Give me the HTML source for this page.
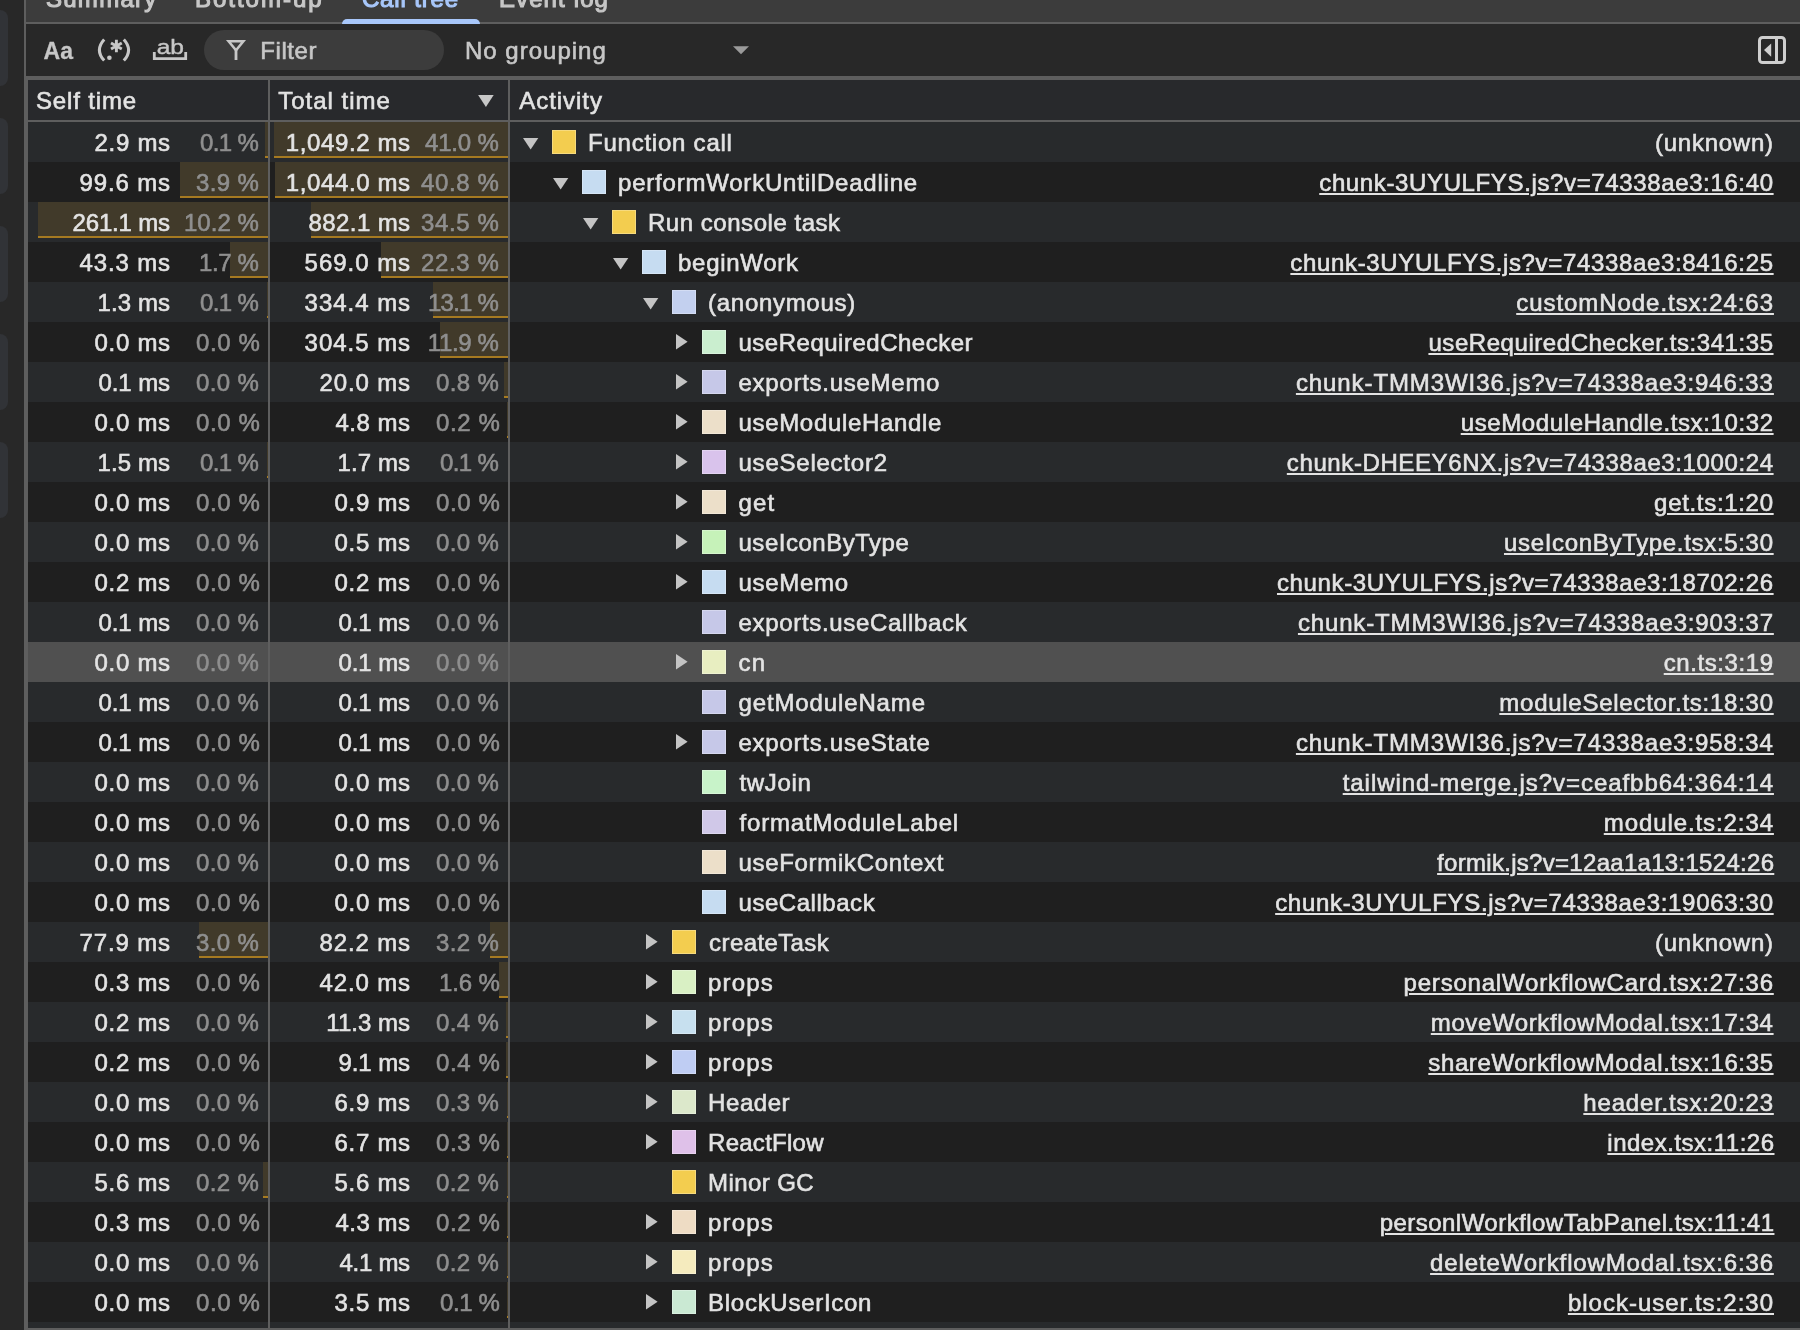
<!DOCTYPE html><html><head><meta charset="utf-8"><title>Call tree</title><style>
*{box-sizing:border-box;margin:0;padding:0}
html,body{width:1800px;height:1330px;overflow:hidden;background:#282828}
body{position:relative;font-family:"Liberation Sans",sans-serif;font-size:24px;color:#e3e3e3;line-height:40px;-webkit-text-stroke:0.6px}
.a{position:absolute}
.lr{left:0;width:8px;height:76px;background:#313337;border-radius:0 8px 8px 0}
.t{white-space:pre;display:block}
.row{left:28px;width:1772px;height:40px}
.o{background:#282a2c}.e{background:#1f1f1f}.h{background:#505050}
.bar{top:0;height:36px;background:#413a2a;border-bottom:2px solid #a67a21}
.n{top:1px;text-align:right;white-space:pre}
.p{color:#8f8f8f}
.sq{top:8px;width:24px;height:24px;border:1px solid rgba(255,255,255,.27)}
.nm{top:1px;white-space:pre}
.lk{top:1px;white-space:pre;text-align:right}
.u{text-decoration:underline;text-decoration-thickness:2px;text-underline-offset:2px}
svg{display:block}
#w{position:absolute;left:0;top:0;width:1800px;height:1330px;will-change:transform}
</style></head><body><div id="w">
<div class="a lr" style="top:10px"></div>
<div class="a lr" style="top:118px"></div>
<div class="a lr" style="top:226px"></div>
<div class="a lr" style="top:334px"></div>
<div class="a lr" style="top:442px"></div>
<div class="a" style="left:24px;top:0;width:2px;height:1330px;background:#5e5e5e"></div>
<div class="a" style="left:26px;top:0;width:1774px;height:22px;background:#3c3c3c"></div>
<div class="a" style="left:26px;top:22px;width:1774px;height:2px;background:#5e5e5e"></div>
<div class="a t" id="tab0" style="left:45.90px;top:-21px;color:#c7c7c7;-webkit-text-stroke:1.1px"><span style="letter-spacing:1.299px;margin-right:-1.299px">Summary</span></div>
<div class="a t" id="tab1" style="left:194.90px;top:-21px;color:#c7c7c7;-webkit-text-stroke:1.1px"><span style="letter-spacing:2.000px;margin-right:-2.000px">Bottom-up</span></div>
<div class="a t" id="tab2" style="left:361.90px;top:-21px;color:#a8c7fa;-webkit-text-stroke:1.1px"><span style="letter-spacing:0.853px;margin-right:-0.853px">Call tree</span></div>
<div class="a t" id="tab3" style="left:498.90px;top:-21px;color:#c7c7c7;-webkit-text-stroke:1.1px"><span style="letter-spacing:1.125px;margin-right:-1.125px">Event log</span></div>
<div class="a" style="left:342px;top:19px;width:138px;height:5px;background:#a8c7fa;border-radius:5px 5px 0 0"></div>
<div class="a" style="left:26px;top:24px;width:1774px;height:52px;background:#282828"></div>
<div class="a" style="left:26px;top:76px;width:1774px;height:4px;background:#5e5e5e"></div>
<svg class="a" style="left:26px;top:24px" width="1774" height="52" viewBox="26 24 1774 52">
<text id="tAa" x="43.6" y="58.6" stroke="#c7c7c7" stroke-width="0.3" font-family="Liberation Sans, sans-serif" font-weight="bold" font-size="23" fill="#c7c7c7">Aa</text>
<g fill="none" stroke="#c7c7c7" stroke-width="3" stroke-linecap="butt">
<path d="M104.2 39.4Q94.6 50 104.2 60.6"/>
<path d="M123.8 39.4Q133.4 50 123.8 60.6"/>
<path d="M116.4 39.8v12.4M111 42.9l10.8 6.2M121.8 42.9l-10.8 6.2" stroke-width="2.9"/>
</g>
<circle cx="109.4" cy="57.7" r="2.3" fill="#c7c7c7"/>
<text id="tab" transform="translate(156.7,54.4) scale(1.17,1)" font-family="Liberation Sans, sans-serif" font-size="21" fill="#c7c7c7" stroke="#c7c7c7" stroke-width="0.4">ab</text>
<path d="M154.3 52v6.6h31.4V52" fill="none" stroke="#c7c7c7" stroke-width="2.8"/>
<rect x="204" y="30" width="240" height="40" rx="20" fill="#3c3c3c"/>
<path d="M228.6 41.3h14.8L236 50.3z" fill="none" stroke="#c7c7c7" stroke-width="2.5" stroke-linejoin="miter"/><rect x="234.6" y="49" width="2.8" height="11" fill="#c7c7c7"/>
<path d="M733 46.2h16l-8 8z" fill="#9a9a9a"/>
<rect x="1759.5" y="37.5" width="25" height="25" rx="3" fill="none" stroke="#cfcfcf" stroke-width="3"/>
<path d="M1776.5 38v24" stroke="#cfcfcf" stroke-width="3"/>
<path d="M1771.2 43.5v13.2L1764 50z" fill="#cfcfcf"/>
</svg>
<div class="a t" id="tf" style="left:260.20px;top:31px;color:#c7c7c7"><span style="letter-spacing:0.600px;margin-right:-0.600px">Filter</span></div>
<div class="a t" id="tg" style="left:465.00px;top:31px;color:#c7c7c7"><span style="letter-spacing:1.000px;margin-right:-1.000px">No grouping</span></div>
<div class="a" style="left:26px;top:78px;width:2px;height:1252px;background:#5e5e5e"></div>
<div class="a" style="left:28px;top:80px;width:1772px;height:40px;background:#28292c"></div>
<div class="a" style="left:28px;top:120px;width:1772px;height:2px;background:#5e5e5e"></div>
<div class="a t" id="h0" style="left:36.00px;top:81px;"><span style="letter-spacing:0.853px;margin-right:-0.853px">Self time</span></div>
<div class="a t" id="h1" style="left:278.20px;top:81px;"><span style="letter-spacing:1.000px;margin-right:-1.000px">Total time</span></div>
<div class="a t" id="h2" style="left:519.20px;top:81px;"><span style="letter-spacing:0.972px;margin-right:-0.972px">Activity</span></div>
<svg class="a" style="left:478px;top:95.4px" width="16" height="13" viewBox="0 0 16 13"><path d="M0.1 0h15.6L7.9 11.9z" fill="#c7c7c7"/></svg>
<div class="a row o" style="top:122px">
<div class="a bar" style="left:237.4px;width:2.6px"></div>
<div class="a bar" style="left:245.9px;width:234.1px"></div>
<div class="a n" id="r0a" style="right:1629.90px"><span style="letter-spacing:0.720px;margin-right:-0.720px">2.9 ms</span></div>
<div class="a n p" id="r0b" style="right:1541.10px"><span style="letter-spacing:-0.600px;margin-right:0.600px">0.1 %</span></div>
<div class="a n" id="r0c" style="right:1389.90px"><span style="letter-spacing:0.622px;margin-right:-0.622px">1,049.2 ms</span></div>
<div class="a n p" id="r0d" style="right:1301.10px"><span style="letter-spacing:-0.160px;margin-right:0.160px">41.0 %</span></div>
<svg class="a" style="left:494.9px;top:15.7px" width="16" height="12" viewBox="0 0 16 12"><path d="M0 0h15.3L7.65 11.5z" fill="#c4c4c4"/></svg>
<div class="a sq" style="left:524px;background:#f3cd4f"></div>
<div class="a nm" id="r0n" style="left:560.00px;"><span style="letter-spacing:0.766px;margin-right:-0.766px">Function call</span></div>
<div class="a lk" id="r0l" style="right:27.00px"><span style="letter-spacing:0.750px;margin-right:-0.750px">(unknown)</span></div>
</div>
<div class="a row e" style="top:162px">
<div class="a bar" style="left:152.3px;width:87.7px"></div>
<div class="a bar" style="left:247.1px;width:232.9px"></div>
<div class="a n" id="r1a" style="right:1629.90px"><span style="letter-spacing:0.866px;margin-right:-0.866px">99.6 ms</span></div>
<div class="a n p" id="r1b" style="right:1541.10px"><span style="letter-spacing:0.400px;margin-right:-0.400px">3.9 %</span></div>
<div class="a n" id="r1c" style="right:1389.90px"><span style="letter-spacing:0.622px;margin-right:-0.622px">1,044.0 ms</span></div>
<div class="a n p" id="r1d" style="right:1301.10px"><span style="letter-spacing:0.640px;margin-right:-0.640px">40.8 %</span></div>
<svg class="a" style="left:524.9px;top:15.7px" width="16" height="12" viewBox="0 0 16 12"><path d="M0 0h15.3L7.65 11.5z" fill="#c4c4c4"/></svg>
<div class="a sq" style="left:554px;background:#c6dcf1"></div>
<div class="a nm" id="r1n" style="left:590.00px;"><span style="letter-spacing:0.791px;margin-right:-0.791px">performWorkUntilDeadline</span></div>
<div class="a lk u" id="r1l" style="right:27.00px"><span style="letter-spacing:0.630px;margin-right:-0.630px">chunk-3UYULFYS.js?v=74338ae3:16:40</span></div>
</div>
<div class="a row o" style="top:202px">
<div class="a bar" style="left:10.0px;width:230.0px"></div>
<div class="a bar" style="left:283.2px;width:196.8px"></div>
<div class="a n" id="r2a" style="right:1629.90px"><span style="letter-spacing:-0.171px;margin-right:0.171px">261.1 ms</span></div>
<div class="a n p" id="r2b" style="right:1541.10px"><span style="letter-spacing:0.040px;margin-right:-0.040px">10.2 %</span></div>
<div class="a n" id="r2c" style="right:1389.90px"><span style="letter-spacing:0.401px;margin-right:-0.401px">882.1 ms</span></div>
<div class="a n p" id="r2d" style="right:1301.10px"><span style="letter-spacing:0.640px;margin-right:-0.640px">34.5 %</span></div>
<svg class="a" style="left:554.9px;top:15.7px" width="16" height="12" viewBox="0 0 16 12"><path d="M0 0h15.3L7.65 11.5z" fill="#c4c4c4"/></svg>
<div class="a sq" style="left:584px;background:#f3cd4f"></div>
<div class="a nm" id="r2n" style="left:620.00px;"><span style="letter-spacing:0.533px;margin-right:-0.533px">Run console task</span></div>
</div>
<div class="a row e" style="top:242px">
<div class="a bar" style="left:201.9px;width:38.1px"></div>
<div class="a bar" style="left:353.1px;width:126.9px"></div>
<div class="a n" id="r3a" style="right:1629.90px"><span style="letter-spacing:0.866px;margin-right:-0.866px">43.3 ms</span></div>
<div class="a n p" id="r3b" style="right:1541.10px"><span style="letter-spacing:-0.350px;margin-right:0.350px">1.7 %</span></div>
<div class="a n" id="r3c" style="right:1389.90px"><span style="letter-spacing:0.972px;margin-right:-0.972px">569.0 ms</span></div>
<div class="a n p" id="r3d" style="right:1301.10px"><span style="letter-spacing:0.640px;margin-right:-0.640px">22.3 %</span></div>
<svg class="a" style="left:584.9px;top:15.7px" width="16" height="12" viewBox="0 0 16 12"><path d="M0 0h15.3L7.65 11.5z" fill="#c4c4c4"/></svg>
<div class="a sq" style="left:614px;background:#c6dcf1"></div>
<div class="a nm" id="r3n" style="left:650.00px;"><span style="letter-spacing:0.724px;margin-right:-0.724px">beginWork</span></div>
<div class="a lk u" id="r3l" style="right:27.00px"><span style="letter-spacing:0.657px;margin-right:-0.657px">chunk-3UYULFYS.js?v=74338ae3:8416:25</span></div>
</div>
<div class="a row o" style="top:282px">
<div class="a bar" style="left:238.9px;width:1.1px"></div>
<div class="a bar" style="left:405.4px;width:74.6px"></div>
<div class="a n" id="r4a" style="right:1629.90px"><span style="letter-spacing:0.120px;margin-right:-0.120px">1.3 ms</span></div>
<div class="a n p" id="r4b" style="right:1541.10px"><span style="letter-spacing:-0.600px;margin-right:0.600px">0.1 %</span></div>
<div class="a n" id="r4c" style="right:1389.90px"><span style="letter-spacing:0.972px;margin-right:-0.972px">334.4 ms</span></div>
<div class="a n p" id="r4d" style="right:1301.10px"><span style="letter-spacing:-0.760px;margin-right:0.760px">13.1 %</span></div>
<svg class="a" style="left:614.9px;top:15.7px" width="16" height="12" viewBox="0 0 16 12"><path d="M0 0h15.3L7.65 11.5z" fill="#c4c4c4"/></svg>
<div class="a sq" style="left:644px;background:#c3d0ef"></div>
<div class="a nm" id="r4n" style="left:680.10px;"><span style="letter-spacing:0.700px;margin-right:-0.700px">(anonymous)</span></div>
<div class="a lk u" id="r4l" style="right:27.00px"><span style="letter-spacing:0.947px;margin-right:-0.947px">customNode.tsx:24:63</span></div>
</div>
<div class="a row e" style="top:322px">
<div class="a bar" style="left:412.1px;width:67.9px"></div>
<div class="a n" id="r5a" style="right:1629.90px"><span style="letter-spacing:0.720px;margin-right:-0.720px">0.0 ms</span></div>
<div class="a n p" id="r5b" style="right:1540.10px"><span style="letter-spacing:0.650px;margin-right:-0.650px">0.0 %</span></div>
<div class="a n" id="r5c" style="right:1389.90px"><span style="letter-spacing:0.972px;margin-right:-0.972px">304.5 ms</span></div>
<div class="a n p" id="r5d" style="right:1301.10px"><span style="letter-spacing:-0.360px;margin-right:0.360px">11.9 %</span></div>
<svg class="a" style="left:648px;top:11.5px" width="12" height="16" viewBox="0 0 12 16"><path d="M0 0L11.6 7.7L0 15.4z" fill="#c4c4c4"/></svg>
<div class="a sq" style="left:674px;background:#caeecf"></div>
<div class="a nm" id="r5n" style="left:710.50px;"><span style="letter-spacing:0.507px;margin-right:-0.507px">useRequiredChecker</span></div>
<div class="a lk u" id="r5l" style="right:27.00px"><span style="letter-spacing:0.556px;margin-right:-0.556px">useRequiredChecker.ts:341:35</span></div>
</div>
<div class="a row o" style="top:362px">
<div class="a bar" style="left:475.5px;width:4.5px"></div>
<div class="a n" id="r6a" style="right:1629.90px"><span style="letter-spacing:-0.080px;margin-right:0.080px">0.1 ms</span></div>
<div class="a n p" id="r6b" style="right:1541.10px"><span style="letter-spacing:0.400px;margin-right:-0.400px">0.0 %</span></div>
<div class="a n" id="r6c" style="right:1389.90px"><span style="letter-spacing:0.866px;margin-right:-0.866px">20.0 ms</span></div>
<div class="a n p" id="r6d" style="right:1301.10px"><span style="letter-spacing:0.400px;margin-right:-0.400px">0.8 %</span></div>
<svg class="a" style="left:648px;top:11.5px" width="12" height="16" viewBox="0 0 12 16"><path d="M0 0L11.6 7.7L0 15.4z" fill="#c4c4c4"/></svg>
<div class="a sq" style="left:674px;background:#c6c8e8"></div>
<div class="a nm" id="r6n" style="left:710.50px;"><span style="letter-spacing:0.729px;margin-right:-0.729px">exports.useMemo</span></div>
<div class="a lk u" id="r6l" style="right:27.00px"><span style="letter-spacing:0.906px;margin-right:-0.906px">chunk-TMM3WI36.js?v=74338ae3:946:33</span></div>
</div>
<div class="a row e" style="top:402px">
<div class="a bar" style="left:478.9px;width:1.1px"></div>
<div class="a n" id="r7a" style="right:1629.90px"><span style="letter-spacing:0.720px;margin-right:-0.720px">0.0 ms</span></div>
<div class="a n p" id="r7b" style="right:1540.10px"><span style="letter-spacing:0.650px;margin-right:-0.650px">0.0 %</span></div>
<div class="a n" id="r7c" style="right:1389.90px"><span style="letter-spacing:0.520px;margin-right:-0.520px">4.8 ms</span></div>
<div class="a n p" id="r7d" style="right:1300.10px"><span style="letter-spacing:0.650px;margin-right:-0.650px">0.2 %</span></div>
<svg class="a" style="left:648px;top:11.5px" width="12" height="16" viewBox="0 0 12 16"><path d="M0 0L11.6 7.7L0 15.4z" fill="#c4c4c4"/></svg>
<div class="a sq" style="left:674px;background:#ecdfc9"></div>
<div class="a nm" id="r7n" style="left:710.50px;"><span style="letter-spacing:0.671px;margin-right:-0.671px">useModuleHandle</span></div>
<div class="a lk u" id="r7l" style="right:27.00px"><span style="letter-spacing:0.615px;margin-right:-0.615px">useModuleHandle.tsx:10:32</span></div>
</div>
<div class="a row o" style="top:442px">
<div class="a bar" style="left:238.7px;width:1.3px"></div>
<div class="a n" id="r8a" style="right:1629.90px"><span style="letter-spacing:0.120px;margin-right:-0.120px">1.5 ms</span></div>
<div class="a n p" id="r8b" style="right:1541.10px"><span style="letter-spacing:-0.600px;margin-right:0.600px">0.1 %</span></div>
<div class="a n" id="r8c" style="right:1389.90px"><span style="letter-spacing:0.120px;margin-right:-0.120px">1.7 ms</span></div>
<div class="a n p" id="r8d" style="right:1301.10px"><span style="letter-spacing:-0.600px;margin-right:0.600px">0.1 %</span></div>
<svg class="a" style="left:648px;top:11.5px" width="12" height="16" viewBox="0 0 12 16"><path d="M0 0L11.6 7.7L0 15.4z" fill="#c4c4c4"/></svg>
<div class="a sq" style="left:674px;background:#d9c3ec"></div>
<div class="a nm" id="r8n" style="left:710.50px;"><span style="letter-spacing:0.765px;margin-right:-0.765px">useSelector2</span></div>
<div class="a lk u" id="r8l" style="right:27.00px"><span style="letter-spacing:0.605px;margin-right:-0.605px">chunk-DHEEY6NX.js?v=74338ae3:1000:24</span></div>
</div>
<div class="a row e" style="top:482px">
<div class="a n" id="r9a" style="right:1629.90px"><span style="letter-spacing:0.720px;margin-right:-0.720px">0.0 ms</span></div>
<div class="a n p" id="r9b" style="right:1540.10px"><span style="letter-spacing:0.650px;margin-right:-0.650px">0.0 %</span></div>
<div class="a n" id="r9c" style="right:1389.90px"><span style="letter-spacing:0.720px;margin-right:-0.720px">0.9 ms</span></div>
<div class="a n p" id="r9d" style="right:1300.10px"><span style="letter-spacing:0.650px;margin-right:-0.650px">0.0 %</span></div>
<svg class="a" style="left:648px;top:11.5px" width="12" height="16" viewBox="0 0 12 16"><path d="M0 0L11.6 7.7L0 15.4z" fill="#c4c4c4"/></svg>
<div class="a sq" style="left:674px;background:#ecdfc9"></div>
<div class="a nm" id="r9n" style="left:710.50px;"><span style="letter-spacing:1.200px;margin-right:-1.200px">get</span></div>
<div class="a lk u" id="r9l" style="right:27.00px"><span style="letter-spacing:0.680px;margin-right:-0.680px">get.ts:1:20</span></div>
</div>
<div class="a row o" style="top:522px">
<div class="a n" id="r10a" style="right:1629.90px"><span style="letter-spacing:0.720px;margin-right:-0.720px">0.0 ms</span></div>
<div class="a n p" id="r10b" style="right:1541.10px"><span style="letter-spacing:0.400px;margin-right:-0.400px">0.0 %</span></div>
<div class="a n" id="r10c" style="right:1389.90px"><span style="letter-spacing:0.720px;margin-right:-0.720px">0.5 ms</span></div>
<div class="a n p" id="r10d" style="right:1301.10px"><span style="letter-spacing:0.400px;margin-right:-0.400px">0.0 %</span></div>
<svg class="a" style="left:648px;top:11.5px" width="12" height="16" viewBox="0 0 12 16"><path d="M0 0L11.6 7.7L0 15.4z" fill="#c4c4c4"/></svg>
<div class="a sq" style="left:674px;background:#c6f2b9"></div>
<div class="a nm" id="r10n" style="left:710.50px;"><span style="letter-spacing:0.516px;margin-right:-0.516px">useIconByType</span></div>
<div class="a lk u" id="r10l" style="right:27.00px"><span style="letter-spacing:0.676px;margin-right:-0.676px">useIconByType.tsx:5:30</span></div>
</div>
<div class="a row e" style="top:562px">
<div class="a n" id="r11a" style="right:1629.90px"><span style="letter-spacing:0.720px;margin-right:-0.720px">0.2 ms</span></div>
<div class="a n p" id="r11b" style="right:1540.10px"><span style="letter-spacing:0.650px;margin-right:-0.650px">0.0 %</span></div>
<div class="a n" id="r11c" style="right:1389.90px"><span style="letter-spacing:0.720px;margin-right:-0.720px">0.2 ms</span></div>
<div class="a n p" id="r11d" style="right:1300.10px"><span style="letter-spacing:0.650px;margin-right:-0.650px">0.0 %</span></div>
<svg class="a" style="left:648px;top:11.5px" width="12" height="16" viewBox="0 0 12 16"><path d="M0 0L11.6 7.7L0 15.4z" fill="#c4c4c4"/></svg>
<div class="a sq" style="left:674px;background:#c6dcf1"></div>
<div class="a nm" id="r11n" style="left:710.50px;"><span style="letter-spacing:0.698px;margin-right:-0.698px">useMemo</span></div>
<div class="a lk u" id="r11l" style="right:27.00px"><span style="letter-spacing:0.639px;margin-right:-0.639px">chunk-3UYULFYS.js?v=74338ae3:18702:26</span></div>
</div>
<div class="a row o" style="top:602px">
<div class="a n" id="r12a" style="right:1629.90px"><span style="letter-spacing:-0.080px;margin-right:0.080px">0.1 ms</span></div>
<div class="a n p" id="r12b" style="right:1541.10px"><span style="letter-spacing:0.400px;margin-right:-0.400px">0.0 %</span></div>
<div class="a n" id="r12c" style="right:1389.90px"><span style="letter-spacing:-0.080px;margin-right:0.080px">0.1 ms</span></div>
<div class="a n p" id="r12d" style="right:1301.10px"><span style="letter-spacing:0.400px;margin-right:-0.400px">0.0 %</span></div>
<div class="a sq" style="left:674px;background:#c6c8e8"></div>
<div class="a nm" id="r12n" style="left:710.50px;"><span style="letter-spacing:0.676px;margin-right:-0.676px">exports.useCallback</span></div>
<div class="a lk u" id="r12l" style="right:27.00px"><span style="letter-spacing:0.847px;margin-right:-0.847px">chunk-TMM3WI36.js?v=74338ae3:903:37</span></div>
</div>
<div class="a row h" style="top:642px">
<div class="a n" id="r13a" style="right:1629.90px"><span style="letter-spacing:0.720px;margin-right:-0.720px">0.0 ms</span></div>
<div class="a n p" id="r13b" style="right:1541.10px"><span style="letter-spacing:0.400px;margin-right:-0.400px">0.0 %</span></div>
<div class="a n" id="r13c" style="right:1389.90px"><span style="letter-spacing:-0.080px;margin-right:0.080px">0.1 ms</span></div>
<div class="a n p" id="r13d" style="right:1301.10px"><span style="letter-spacing:0.400px;margin-right:-0.400px">0.0 %</span></div>
<svg class="a" style="left:648px;top:11.5px" width="12" height="16" viewBox="0 0 12 16"><path d="M0 0L11.6 7.7L0 15.4z" fill="#c4c4c4"/></svg>
<div class="a sq" style="left:674px;background:#e8eec1"></div>
<div class="a nm" id="r13n" style="left:710.50px;"><span style="letter-spacing:1.200px;margin-right:-1.200px">cn</span></div>
<div class="a lk u" id="r13l" style="right:27.00px"><span style="letter-spacing:0.579px;margin-right:-0.579px">cn.ts:3:19</span></div>
</div>
<div class="a row o" style="top:682px">
<div class="a n" id="r14a" style="right:1629.90px"><span style="letter-spacing:-0.080px;margin-right:0.080px">0.1 ms</span></div>
<div class="a n p" id="r14b" style="right:1541.10px"><span style="letter-spacing:0.400px;margin-right:-0.400px">0.0 %</span></div>
<div class="a n" id="r14c" style="right:1389.90px"><span style="letter-spacing:-0.080px;margin-right:0.080px">0.1 ms</span></div>
<div class="a n p" id="r14d" style="right:1301.10px"><span style="letter-spacing:0.400px;margin-right:-0.400px">0.0 %</span></div>
<div class="a sq" style="left:674px;background:#c6c8e8"></div>
<div class="a nm" id="r14n" style="left:710.50px;"><span style="letter-spacing:0.867px;margin-right:-0.867px">getModuleName</span></div>
<div class="a lk u" id="r14l" style="right:27.00px"><span style="letter-spacing:0.735px;margin-right:-0.735px">moduleSelector.ts:18:30</span></div>
</div>
<div class="a row e" style="top:722px">
<div class="a n" id="r15a" style="right:1629.90px"><span style="letter-spacing:-0.080px;margin-right:0.080px">0.1 ms</span></div>
<div class="a n p" id="r15b" style="right:1540.10px"><span style="letter-spacing:0.650px;margin-right:-0.650px">0.0 %</span></div>
<div class="a n" id="r15c" style="right:1389.90px"><span style="letter-spacing:-0.080px;margin-right:0.080px">0.1 ms</span></div>
<div class="a n p" id="r15d" style="right:1300.10px"><span style="letter-spacing:0.650px;margin-right:-0.650px">0.0 %</span></div>
<svg class="a" style="left:648px;top:11.5px" width="12" height="16" viewBox="0 0 12 16"><path d="M0 0L11.6 7.7L0 15.4z" fill="#c4c4c4"/></svg>
<div class="a sq" style="left:674px;background:#c6c8e8"></div>
<div class="a nm" id="r15n" style="left:710.50px;"><span style="letter-spacing:0.745px;margin-right:-0.745px">exports.useState</span></div>
<div class="a lk u" id="r15l" style="right:27.00px"><span style="letter-spacing:0.906px;margin-right:-0.906px">chunk-TMM3WI36.js?v=74338ae3:958:34</span></div>
</div>
<div class="a row o" style="top:762px">
<div class="a n" id="r16a" style="right:1629.90px"><span style="letter-spacing:0.720px;margin-right:-0.720px">0.0 ms</span></div>
<div class="a n p" id="r16b" style="right:1541.10px"><span style="letter-spacing:0.400px;margin-right:-0.400px">0.0 %</span></div>
<div class="a n" id="r16c" style="right:1389.90px"><span style="letter-spacing:0.720px;margin-right:-0.720px">0.0 ms</span></div>
<div class="a n p" id="r16d" style="right:1301.10px"><span style="letter-spacing:0.400px;margin-right:-0.400px">0.0 %</span></div>
<div class="a sq" style="left:674px;background:#c8f3c9"></div>
<div class="a nm" id="r16n" style="left:711.50px;"><span style="letter-spacing:0.680px;margin-right:-0.680px">twJoin</span></div>
<div class="a lk u" id="r16l" style="right:27.00px"><span style="letter-spacing:0.942px;margin-right:-0.942px">tailwind-merge.js?v=ceafbb64:364:14</span></div>
</div>
<div class="a row e" style="top:802px">
<div class="a n" id="r17a" style="right:1629.90px"><span style="letter-spacing:0.720px;margin-right:-0.720px">0.0 ms</span></div>
<div class="a n p" id="r17b" style="right:1540.10px"><span style="letter-spacing:0.650px;margin-right:-0.650px">0.0 %</span></div>
<div class="a n" id="r17c" style="right:1389.90px"><span style="letter-spacing:0.720px;margin-right:-0.720px">0.0 ms</span></div>
<div class="a n p" id="r17d" style="right:1300.10px"><span style="letter-spacing:0.650px;margin-right:-0.650px">0.0 %</span></div>
<div class="a sq" style="left:674px;background:#d0c8e8"></div>
<div class="a nm" id="r17n" style="left:711.50px;"><span style="letter-spacing:0.825px;margin-right:-0.825px">formatModuleLabel</span></div>
<div class="a lk u" id="r17l" style="right:27.00px"><span style="letter-spacing:0.907px;margin-right:-0.907px">module.ts:2:34</span></div>
</div>
<div class="a row o" style="top:842px">
<div class="a n" id="r18a" style="right:1629.90px"><span style="letter-spacing:0.720px;margin-right:-0.720px">0.0 ms</span></div>
<div class="a n p" id="r18b" style="right:1541.10px"><span style="letter-spacing:0.400px;margin-right:-0.400px">0.0 %</span></div>
<div class="a n" id="r18c" style="right:1389.90px"><span style="letter-spacing:0.720px;margin-right:-0.720px">0.0 ms</span></div>
<div class="a n p" id="r18d" style="right:1301.10px"><span style="letter-spacing:0.400px;margin-right:-0.400px">0.0 %</span></div>
<div class="a sq" style="left:674px;background:#ecdfc9"></div>
<div class="a nm" id="r18n" style="left:710.50px;"><span style="letter-spacing:0.679px;margin-right:-0.679px">useFormikContext</span></div>
<div class="a lk u" id="r18l" style="right:26.00px"><span style="letter-spacing:0.296px;margin-right:-0.296px">formik.js?v=12aa1a13:1524:26</span></div>
</div>
<div class="a row e" style="top:882px">
<div class="a n" id="r19a" style="right:1629.90px"><span style="letter-spacing:0.720px;margin-right:-0.720px">0.0 ms</span></div>
<div class="a n p" id="r19b" style="right:1540.10px"><span style="letter-spacing:0.650px;margin-right:-0.650px">0.0 %</span></div>
<div class="a n" id="r19c" style="right:1389.90px"><span style="letter-spacing:0.720px;margin-right:-0.720px">0.0 ms</span></div>
<div class="a n p" id="r19d" style="right:1300.10px"><span style="letter-spacing:0.650px;margin-right:-0.650px">0.0 %</span></div>
<div class="a sq" style="left:674px;background:#c6dcf1"></div>
<div class="a nm" id="r19n" style="left:710.50px;"><span style="letter-spacing:0.540px;margin-right:-0.540px">useCallback</span></div>
<div class="a lk u" id="r19l" style="right:27.00px"><span style="letter-spacing:0.690px;margin-right:-0.690px">chunk-3UYULFYS.js?v=74338ae3:19063:30</span></div>
</div>
<div class="a row o" style="top:922px">
<div class="a bar" style="left:171.4px;width:68.6px"></div>
<div class="a bar" style="left:461.7px;width:18.3px"></div>
<div class="a n" id="r20a" style="right:1629.90px"><span style="letter-spacing:0.866px;margin-right:-0.866px">77.9 ms</span></div>
<div class="a n p" id="r20b" style="right:1541.10px"><span style="letter-spacing:0.400px;margin-right:-0.400px">3.0 %</span></div>
<div class="a n" id="r20c" style="right:1389.90px"><span style="letter-spacing:0.866px;margin-right:-0.866px">82.2 ms</span></div>
<div class="a n p" id="r20d" style="right:1301.10px"><span style="letter-spacing:0.400px;margin-right:-0.400px">3.2 %</span></div>
<svg class="a" style="left:618px;top:11.5px" width="12" height="16" viewBox="0 0 12 16"><path d="M0 0L11.6 7.7L0 15.4z" fill="#c4c4c4"/></svg>
<div class="a sq" style="left:644px;background:#f3cd4f"></div>
<div class="a nm" id="r20n" style="left:681.10px;"><span style="letter-spacing:0.400px;margin-right:-0.400px">createTask</span></div>
<div class="a lk" id="r20l" style="right:27.00px"><span style="letter-spacing:0.750px;margin-right:-0.750px">(unknown)</span></div>
</div>
<div class="a row e" style="top:962px">
<div class="a bar" style="left:470.6px;width:9.4px"></div>
<div class="a n" id="r21a" style="right:1629.90px"><span style="letter-spacing:0.720px;margin-right:-0.720px">0.3 ms</span></div>
<div class="a n p" id="r21b" style="right:1540.10px"><span style="letter-spacing:0.650px;margin-right:-0.650px">0.0 %</span></div>
<div class="a n" id="r21c" style="right:1389.90px"><span style="letter-spacing:0.866px;margin-right:-0.866px">42.0 ms</span></div>
<div class="a n p" id="r21d" style="right:1300.10px"><span style="letter-spacing:-0.100px;margin-right:0.100px">1.6 %</span></div>
<svg class="a" style="left:618px;top:11.5px" width="12" height="16" viewBox="0 0 12 16"><path d="M0 0L11.6 7.7L0 15.4z" fill="#c4c4c4"/></svg>
<div class="a sq" style="left:644px;background:#d9f0c4"></div>
<div class="a nm" id="r21n" style="left:680.10px;"><span style="letter-spacing:1.150px;margin-right:-1.150px">props</span></div>
<div class="a lk u" id="r21l" style="right:27.00px"><span style="letter-spacing:0.794px;margin-right:-0.794px">personalWorkflowCard.tsx:27:36</span></div>
</div>
<div class="a row o" style="top:1002px">
<div class="a bar" style="left:477.5px;width:2.5px"></div>
<div class="a n" id="r22a" style="right:1629.90px"><span style="letter-spacing:0.720px;margin-right:-0.720px">0.2 ms</span></div>
<div class="a n p" id="r22b" style="right:1541.10px"><span style="letter-spacing:0.400px;margin-right:-0.400px">0.0 %</span></div>
<div class="a n" id="r22c" style="right:1389.90px"><span style="letter-spacing:0.033px;margin-right:-0.033px">11.3 ms</span></div>
<div class="a n p" id="r22d" style="right:1301.10px"><span style="letter-spacing:0.400px;margin-right:-0.400px">0.4 %</span></div>
<svg class="a" style="left:618px;top:11.5px" width="12" height="16" viewBox="0 0 12 16"><path d="M0 0L11.6 7.7L0 15.4z" fill="#c4c4c4"/></svg>
<div class="a sq" style="left:644px;background:#c7e0ef"></div>
<div class="a nm" id="r22n" style="left:680.10px;"><span style="letter-spacing:1.150px;margin-right:-1.150px">props</span></div>
<div class="a lk u" id="r22l" style="right:27.00px"><span style="letter-spacing:0.609px;margin-right:-0.609px">moveWorkflowModal.tsx:17:34</span></div>
</div>
<div class="a row e" style="top:1042px">
<div class="a bar" style="left:478.0px;width:2.0px"></div>
<div class="a n" id="r23a" style="right:1629.90px"><span style="letter-spacing:0.720px;margin-right:-0.720px">0.2 ms</span></div>
<div class="a n p" id="r23b" style="right:1540.10px"><span style="letter-spacing:0.650px;margin-right:-0.650px">0.0 %</span></div>
<div class="a n" id="r23c" style="right:1389.90px"><span style="letter-spacing:-0.080px;margin-right:0.080px">9.1 ms</span></div>
<div class="a n p" id="r23d" style="right:1300.10px"><span style="letter-spacing:0.650px;margin-right:-0.650px">0.4 %</span></div>
<svg class="a" style="left:618px;top:11.5px" width="12" height="16" viewBox="0 0 12 16"><path d="M0 0L11.6 7.7L0 15.4z" fill="#c4c4c4"/></svg>
<div class="a sq" style="left:644px;background:#bfcdf3"></div>
<div class="a nm" id="r23n" style="left:680.10px;"><span style="letter-spacing:1.150px;margin-right:-1.150px">props</span></div>
<div class="a lk u" id="r23l" style="right:27.00px"><span style="letter-spacing:0.630px;margin-right:-0.630px">shareWorkflowModal.tsx:16:35</span></div>
</div>
<div class="a row o" style="top:1082px">
<div class="a bar" style="left:478.5px;width:1.5px"></div>
<div class="a n" id="r24a" style="right:1629.90px"><span style="letter-spacing:0.720px;margin-right:-0.720px">0.0 ms</span></div>
<div class="a n p" id="r24b" style="right:1541.10px"><span style="letter-spacing:0.400px;margin-right:-0.400px">0.0 %</span></div>
<div class="a n" id="r24c" style="right:1389.90px"><span style="letter-spacing:0.720px;margin-right:-0.720px">6.9 ms</span></div>
<div class="a n p" id="r24d" style="right:1301.10px"><span style="letter-spacing:0.400px;margin-right:-0.400px">0.3 %</span></div>
<svg class="a" style="left:618px;top:11.5px" width="12" height="16" viewBox="0 0 12 16"><path d="M0 0L11.6 7.7L0 15.4z" fill="#c4c4c4"/></svg>
<div class="a sq" style="left:644px;background:#dce8cb"></div>
<div class="a nm" id="r24n" style="left:680.10px;"><span style="letter-spacing:0.560px;margin-right:-0.560px">Header</span></div>
<div class="a lk u" id="r24l" style="right:27.00px"><span style="letter-spacing:0.813px;margin-right:-0.813px">header.tsx:20:23</span></div>
</div>
<div class="a row e" style="top:1122px">
<div class="a bar" style="left:478.5px;width:1.5px"></div>
<div class="a n" id="r25a" style="right:1629.90px"><span style="letter-spacing:0.720px;margin-right:-0.720px">0.0 ms</span></div>
<div class="a n p" id="r25b" style="right:1540.10px"><span style="letter-spacing:0.650px;margin-right:-0.650px">0.0 %</span></div>
<div class="a n" id="r25c" style="right:1389.90px"><span style="letter-spacing:0.720px;margin-right:-0.720px">6.7 ms</span></div>
<div class="a n p" id="r25d" style="right:1300.10px"><span style="letter-spacing:0.650px;margin-right:-0.650px">0.3 %</span></div>
<svg class="a" style="left:618px;top:11.5px" width="12" height="16" viewBox="0 0 12 16"><path d="M0 0L11.6 7.7L0 15.4z" fill="#c4c4c4"/></svg>
<div class="a sq" style="left:644px;background:#dfc1e9"></div>
<div class="a nm" id="r25n" style="left:680.10px;"><span style="letter-spacing:0.251px;margin-right:-0.251px">ReactFlow</span></div>
<div class="a lk u" id="r25l" style="right:26.00px"><span style="letter-spacing:0.500px;margin-right:-0.500px">index.tsx:11:26</span></div>
</div>
<div class="a row o" style="top:1162px">
<div class="a bar" style="left:235.1px;width:4.9px"></div>
<div class="a bar" style="left:478.8px;width:1.2px"></div>
<div class="a n" id="r26a" style="right:1629.90px"><span style="letter-spacing:0.720px;margin-right:-0.720px">5.6 ms</span></div>
<div class="a n p" id="r26b" style="right:1541.10px"><span style="letter-spacing:0.400px;margin-right:-0.400px">0.2 %</span></div>
<div class="a n" id="r26c" style="right:1389.90px"><span style="letter-spacing:0.720px;margin-right:-0.720px">5.6 ms</span></div>
<div class="a n p" id="r26d" style="right:1301.10px"><span style="letter-spacing:0.400px;margin-right:-0.400px">0.2 %</span></div>
<div class="a sq" style="left:644px;background:#f3cd4f"></div>
<div class="a nm" id="r26n" style="left:680.10px;"><span style="letter-spacing:0.400px;margin-right:-0.400px">Minor GC</span></div>
</div>
<div class="a row e" style="top:1202px">
<div class="a bar" style="left:479.0px;width:1.0px"></div>
<div class="a n" id="r27a" style="right:1629.90px"><span style="letter-spacing:0.720px;margin-right:-0.720px">0.3 ms</span></div>
<div class="a n p" id="r27b" style="right:1540.10px"><span style="letter-spacing:0.650px;margin-right:-0.650px">0.0 %</span></div>
<div class="a n" id="r27c" style="right:1389.90px"><span style="letter-spacing:0.520px;margin-right:-0.520px">4.3 ms</span></div>
<div class="a n p" id="r27d" style="right:1300.10px"><span style="letter-spacing:0.650px;margin-right:-0.650px">0.2 %</span></div>
<svg class="a" style="left:618px;top:11.5px" width="12" height="16" viewBox="0 0 12 16"><path d="M0 0L11.6 7.7L0 15.4z" fill="#c4c4c4"/></svg>
<div class="a sq" style="left:644px;background:#eedcc4"></div>
<div class="a nm" id="r27n" style="left:680.10px;"><span style="letter-spacing:1.150px;margin-right:-1.150px">props</span></div>
<div class="a lk u" id="r27l" style="right:26.00px"><span style="letter-spacing:0.469px;margin-right:-0.469px">personlWorkflowTabPanel.tsx:11:41</span></div>
</div>
<div class="a row o" style="top:1242px">
<div class="a bar" style="left:479.1px;width:0.9px"></div>
<div class="a n" id="r28a" style="right:1629.90px"><span style="letter-spacing:0.720px;margin-right:-0.720px">0.0 ms</span></div>
<div class="a n p" id="r28b" style="right:1541.10px"><span style="letter-spacing:0.400px;margin-right:-0.400px">0.0 %</span></div>
<div class="a n" id="r28c" style="right:1389.90px"><span style="letter-spacing:-0.280px;margin-right:0.280px">4.1 ms</span></div>
<div class="a n p" id="r28d" style="right:1301.10px"><span style="letter-spacing:0.400px;margin-right:-0.400px">0.2 %</span></div>
<svg class="a" style="left:618px;top:11.5px" width="12" height="16" viewBox="0 0 12 16"><path d="M0 0L11.6 7.7L0 15.4z" fill="#c4c4c4"/></svg>
<div class="a sq" style="left:644px;background:#f5ebbe"></div>
<div class="a nm" id="r28n" style="left:680.10px;"><span style="letter-spacing:1.150px;margin-right:-1.150px">props</span></div>
<div class="a lk u" id="r28l" style="right:27.00px"><span style="letter-spacing:0.860px;margin-right:-0.860px">deleteWorkflowModal.tsx:6:36</span></div>
</div>
<div class="a row e" style="top:1282px">
<div class="a bar" style="left:479.2px;width:0.8px"></div>
<div class="a n" id="r29a" style="right:1629.90px"><span style="letter-spacing:0.720px;margin-right:-0.720px">0.0 ms</span></div>
<div class="a n p" id="r29b" style="right:1540.10px"><span style="letter-spacing:0.650px;margin-right:-0.650px">0.0 %</span></div>
<div class="a n" id="r29c" style="right:1389.90px"><span style="letter-spacing:0.720px;margin-right:-0.720px">3.5 ms</span></div>
<div class="a n p" id="r29d" style="right:1300.10px"><span style="letter-spacing:-0.350px;margin-right:0.350px">0.1 %</span></div>
<svg class="a" style="left:618px;top:11.5px" width="12" height="16" viewBox="0 0 12 16"><path d="M0 0L11.6 7.7L0 15.4z" fill="#c4c4c4"/></svg>
<div class="a sq" style="left:644px;background:#cae9d3"></div>
<div class="a nm" id="r29n" style="left:680.10px;"><span style="letter-spacing:0.717px;margin-right:-0.717px">BlockUserIcon</span></div>
<div class="a lk u" id="r29l" style="right:27.00px"><span style="letter-spacing:1.000px;margin-right:-1.000px">block-user.ts:2:30</span></div>
</div>
<div class="a" style="left:28px;top:1322px;width:1772px;height:6px;background:#282a2c"></div>
<div class="a" style="left:268px;top:80px;width:2px;height:1250px;background:#5e5e5e"></div>
<div class="a" style="left:508px;top:80px;width:2px;height:1250px;background:#5e5e5e"></div>
<div class="a" style="left:26px;top:1328px;width:1774px;height:2px;background:#5e5e5e"></div>
</div></body></html>
